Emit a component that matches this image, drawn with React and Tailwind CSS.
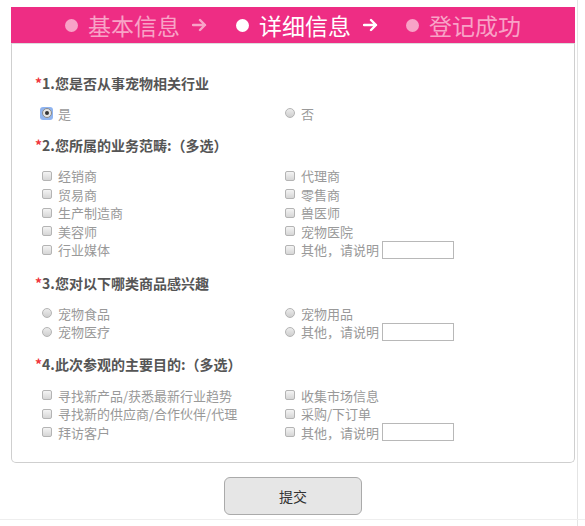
import React from "react";

const font = { fontFamily: '"Microsoft YaHei", "Noto Sans CJK SC", "Liberation Sans", sans-serif' };

function Radio({ checked }) {
  if (checked) {
    return (
      <span className="inline-flex items-center justify-center w-[13px] h-[13px] rounded-[3px] bg-[#8fb4f0] mr-[5px] shrink-0">
        <span className="flex items-center justify-center w-[10px] h-[10px] rounded-full border border-[#8a8a8a] bg-[#e4e4e4]">
          <span className="w-[4px] h-[4px] rounded-full bg-[#333]" />
        </span>
      </span>
    );
  }
  return (
    <span className="inline-flex items-center justify-center w-[13px] h-[13px] mr-[5px] shrink-0">
      <span className="w-[10px] h-[10px] rounded-full border border-[#b4b4b4] bg-gradient-to-b from-[#ececec] to-[#cfcfcf]" />
    </span>
  );
}

function Check() {
  return (
    <span className="inline-flex items-center justify-center w-[13px] h-[13px] mr-[5px] shrink-0">
      <span className="w-[10px] h-[10px] rounded-[2px] border border-[#b4b4b4] bg-gradient-to-b from-[#f4f4f4] to-[#d6d6d6]" />
    </span>
  );
}

function Arrow({ color }) {
  return (
    <svg width="15" height="14" viewBox="0 0 15 14" className="ml-[12px]">
      <path d="M1 7 H13 M8 2 L13 7 L8 12" fill="none" stroke={color} strokeWidth="2.4" strokeLinecap="round" strokeLinejoin="round" />
    </svg>
  );
}

function Option({ type, label, checked, other }) {
  return (
    <div className="flex items-center h-[18.5px] text-[13px] text-[#999]">
      {type === "radio" ? <Radio checked={checked} /> : <Check />}
      <span>{label}</span>
      {other && <span className="ml-[3px] w-[72px] h-[18px] border border-[#b8b8b8] bg-white" />}
    </div>
  );
}

function Question({ title, children, mt }) {
  return (
    <div className={mt}>
      <div className="flex items-center h-[20px] text-[14px] font-bold text-[#555]">
        <span className="text-[#f0343c]">*</span>
        <span>{title}</span>
      </div>
      <div className="pl-[5px]">{children}</div>
    </div>
  );
}

function Grid({ items, type }) {
  return (
    <div className="grid grid-cols-[243px_243px]">
      {items.map((it, i) => (
        <Option key={i} type={type} {...it} />
      ))}
    </div>
  );
}

export default function App() {
  return (
    <div className="w-[585px] h-[526px] bg-white overflow-hidden relative" style={font}>
      <div className="absolute top-0 right-[7px] w-px h-full bg-[#e4e4e4]" />
      <div className="pt-[7px] pl-[11px] pr-[10px]">
        {/* ---------------- STEPS ---------------- */}
        <div className="h-[36px] bg-[#ee2d84] flex items-center justify-center text-[23px] leading-none">
          <span className="flex items-center text-[#f8a3c7]">
            <span className="w-[13px] h-[13px] rounded-full bg-[#f8a3c7] mr-[10px]" />
            基本信息
            <Arrow color="#f8a3c7" />
          </span>
          <span className="flex items-center text-white ml-[29px]">
            <span className="w-[13px] h-[13px] rounded-full bg-white mr-[10px]" />
            详细信息
            <Arrow color="#ffffff" />
          </span>
          <span className="flex items-center text-[#f8a3c7] ml-[28px]">
            <span className="w-[13px] h-[13px] rounded-full bg-[#f8a3c7] mr-[10px]" />
            登记成功
          </span>
        </div>

        {/* ---------------- FORM ---------------- */}
        <div className="h-[420px] border border-[#cfcfcf] border-t-[#dcdcdc] rounded-b-[5px] pl-[23px] pt-[29px]">
          <Question title="1.您是否从事宠物相关行业">
            <div className="pt-[11px]">
              <Grid type="radio" items={[{ label: "是", checked: true }, { label: "否" }]} />
            </div>
          </Question>

          <Question title="2.您所属的业务范畴:（多选）" mt="mt-[13px]">
            <div className="pt-[11px]">
              <Grid
                type="check"
                items={[
                  { label: "经销商" },
                  { label: "代理商" },
                  { label: "贸易商" },
                  { label: "零售商" },
                  { label: "生产制造商" },
                  { label: "兽医师" },
                  { label: "美容师" },
                  { label: "宠物医院" },
                  { label: "行业媒体" },
                  { label: "其他，请说明", other: true },
                ]}
              />
            </div>
          </Question>

          <Question title="3.您对以下哪类商品感兴趣" mt="mt-[14px]">
            <div className="pt-[11px]">
              <Grid
                type="radio"
                items={[
                  { label: "宠物食品" },
                  { label: "宠物用品" },
                  { label: "宠物医疗" },
                  { label: "其他，请说明", other: true },
                ]}
              />
            </div>
          </Question>

          <Question title="4.此次参观的主要目的:（多选）" mt="mt-[13px]">
            <div className="pt-[12px]">
              <Grid
                type="check"
                items={[
                  { label: "寻找新产品/获悉最新行业趋势" },
                  { label: "收集市场信息" },
                  { label: "寻找新的供应商/合作伙伴/代理" },
                  { label: "采购/下订单" },
                  { label: "拜访客户" },
                  { label: "其他，请说明", other: true },
                ]}
              />
            </div>
          </Question>
        </div>

        {/* ---------------- SUBMIT ---------------- */}
        <div className="flex justify-center pt-[14px]">
          <button className="w-[138px] h-[38px] rounded-[6px] border border-[#aaa] bg-[#e6e6e6] text-[14px] text-[#333]">
            提交
          </button>
        </div>
      </div>
      <div className="absolute left-0 right-0 top-[519px] h-px bg-[#eee]" />
    </div>
  );
}
